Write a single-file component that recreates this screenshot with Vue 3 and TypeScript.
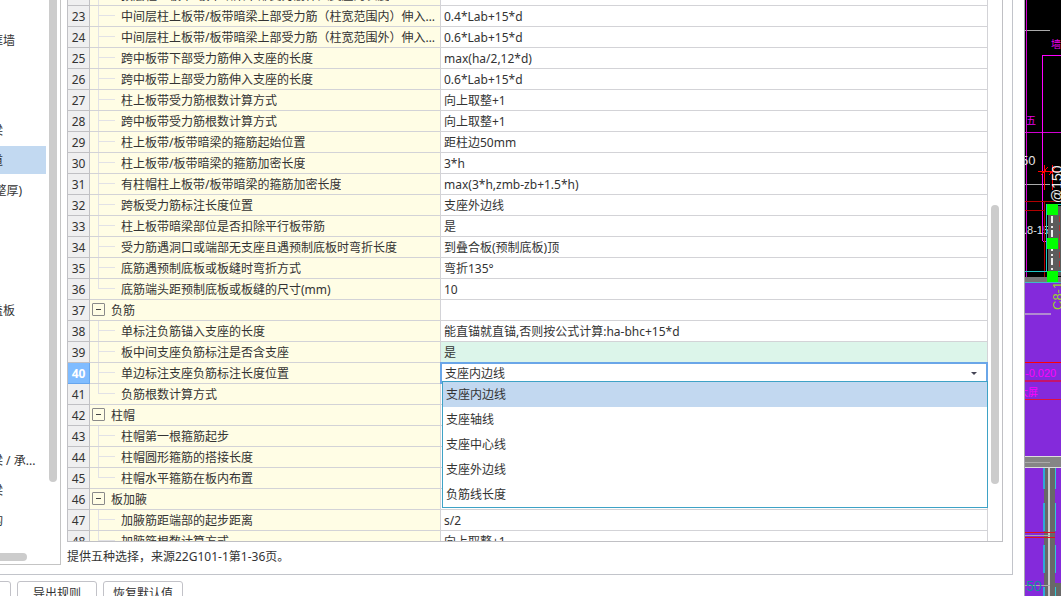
<script setup lang="ts">
import { ref } from 'vue'

interface Row {
  no: number
  name: string
  value: string
  group?: boolean
  last?: boolean
  marked?: boolean
}

const rows: Row[] = [
  { no: 22, name: '顶层柱上板带/板带暗梁下部受力筋伸入支座的长度', value: '' },
  { no: 23, name: '中间层柱上板带/板带暗梁上部受力筋（柱宽范围内）伸入支座的长度', value: '0.4*Lab+15*d' },
  { no: 24, name: '中间层柱上板带/板带暗梁上部受力筋（柱宽范围外）伸入支座的长度', value: '0.6*Lab+15*d' },
  { no: 25, name: '跨中板带下部受力筋伸入支座的长度', value: 'max(ha/2,12*d)' },
  { no: 26, name: '跨中板带上部受力筋伸入支座的长度', value: '0.6*Lab+15*d' },
  { no: 27, name: '柱上板带受力筋根数计算方式', value: '向上取整+1' },
  { no: 28, name: '跨中板带受力筋根数计算方式', value: '向上取整+1' },
  { no: 29, name: '柱上板带/板带暗梁的箍筋起始位置', value: '距柱边50mm' },
  { no: 30, name: '柱上板带/板带暗梁的箍筋加密长度', value: '3*h' },
  { no: 31, name: '有柱帽柱上板带/板带暗梁的箍筋加密长度', value: 'max(3*h,zmb-zb+1.5*h)' },
  { no: 32, name: '跨板受力筋标注长度位置', value: '支座外边线' },
  { no: 33, name: '柱上板带暗梁部位是否扣除平行板带筋', value: '是' },
  { no: 34, name: '受力筋遇洞口或端部无支座且遇预制底板时弯折长度', value: '到叠合板(预制底板)顶' },
  { no: 35, name: '底筋遇预制底板或板缝时弯折方式', value: '弯折135°' },
  { no: 36, name: '底筋端头距预制底板或板缝的尺寸(mm)', value: '10', last: true },
  { no: 37, name: '负筋', value: '', group: true },
  { no: 38, name: '单标注负筋锚入支座的长度', value: '能直锚就直锚,否则按公式计算:ha-bhc+15*d' },
  { no: 39, name: '板中间支座负筋标注是否含支座', value: '是', marked: true },
  { no: 40, name: '单边标注支座负筋标注长度位置', value: '支座内边线' },
  { no: 41, name: '负筋根数计算方式', value: '', last: true },
  { no: 42, name: '柱帽', value: '', group: true },
  { no: 43, name: '柱帽第一根箍筋起步', value: '' },
  { no: 44, name: '柱帽圆形箍筋的搭接长度', value: '' },
  { no: 45, name: '柱帽水平箍筋在板内布置', value: '', last: true },
  { no: 46, name: '板加腋', value: '', group: true },
  { no: 47, name: '加腋筋距端部的起步距离', value: 's/2' },
  { no: 48, name: '加腋筋根数计算方式', value: '向上取整+1' },
]

const options = ['支座内边线', '支座轴线', '支座中心线', '支座外边线', '负筋线长度']
const position = ref(options[0])
const activeNo = 40

const categories = [
  '', '框墙', '', '', '梁', '道', '(整厚)', '', '', '', '盖板',
  '', '', '', '', '梁 / 承...', '梁', '构',
]
const activeCategory = 5
</script>

<template>
  <div class="app">
    <main class="dialog">
      <section class="panel">
        <nav class="sidebar">
          <ul class="categories">
            <li v-for="(c, i) in categories" :key="i" :class="{ active: i === activeCategory }">
              <span>{{ c }}</span>
            </li>
          </ul>
          <div class="side-thumb"></div>
          <div class="side-hthumb"></div>
        </nav>

        <div class="content">
          <div class="grid">
            <div class="viewport">
              <table>
                <colgroup>
                  <col class="c-no" /><col class="c-name" /><col />
                </colgroup>
                <tbody>
                  <tr v-for="r in rows" :key="r.no">
                    <th scope="row" :class="{ active: r.no === activeNo }">{{ r.no }}</th>
                    <td class="name" :class="r.group ? 'group' : 'child'">
                      <div class="cell">
                        <button v-if="r.group" class="toggle" type="button" :aria-label="'折叠' + r.name"></button>
                        <span v-else class="branch" :class="{ last: r.last }"></span>
                        <span class="label">{{ r.name }}</span>
                      </div>
                    </td>
                    <td class="value" :class="{ marked: r.marked }">
                      <template v-if="r.no === activeNo">
                        <div class="combo">
                          <select v-model="position" :aria-label="r.name">
                            <option v-for="o in options" :key="o">{{ o }}</option>
                          </select>
                          <svg class="arrow" viewBox="0 0 6 3" width="6" height="3"><path d="M0 0H6L3 3Z" /></svg>
                        </div>
                        <ul class="menu" role="listbox" :aria-label="r.name">
                          <li
                            v-for="o in options" :key="o" role="option"
                            :aria-selected="o === position" @click="position = o"
                          >{{ o }}</li>
                        </ul>
                      </template>
                      <template v-else>{{ r.value }}</template>
                    </td>
                  </tr>
                </tbody>
              </table>
            </div>
            <div class="gutter"><div class="thumb"></div></div>
          </div>
          <p class="note">提供五种选择，来源22G101-1第1-36页。</p>
        </div>
      </section>

      <footer class="actions">
        <button type="button" class="cut" aria-label="导入规则"></button>
        <button type="button">导出规则</button>
        <button type="button">恢复默认值</button>
      </footer>
    </main>

    <svg class="drawing" width="37" height="596" viewBox="0 0 37 596" shape-rendering="crispEdges">
      <rect width="37" height="596" fill="#000" />
      <rect y="283" width="37" height="313" fill="#842adb" />

      <!-- upper plan -->
      <path d="M1 30.500H26M1 184.500H26" stroke="#aaa" fill="none" />
      <rect x="2" y="0" width="1" height="283" fill="#d000d0" />
      <path d="M1 132.500H37" stroke="#d000d0" />
      <path d="M18.500 241V55.500H37M18.500 241H37" stroke="#f0f" fill="none" />
      <g class="cad" fill="#e800e8">
        <text x="27" y="48" font-size="10">墙</text>
        <text x="2" y="124" font-size="10">五</text>
      </g>
      <g class="cad" fill="#e6e6e6">
        <text x="-3" y="165" font-size="13">50</text>
        <text x="0" y="234" font-size="11">.8-15</text>
      </g>
      <path d="M14 171.500H37M20.500 165V190M28.500 165V190M17 175L24 167M25 175L32 167" stroke="#f00" fill="none" />
      <path d="M1 201.500H20M1 210.500H20M20.500 277V201.500H37" stroke="#b00000" fill="none" />
      <rect x="24" y="206" width="13" height="70" fill="#5c5c5c" />
      <path d="M22.500 204V272M1 271.500H37M26 204.500H37" stroke="#20c8c8" fill="none" />
      <path d="M28 216V270" stroke="#eee" stroke-width="2" stroke-dasharray="7 3 2 2" fill="none" />
      <path d="M35 216V270" stroke="#b03030" stroke-dasharray="6 3" fill="none" />
      <rect x="1" y="277" width="37" height="5" fill="#777" />
      <rect x="1" y="282" width="36" height="1" fill="#40b8c8" />
      <g class="cad" transform="rotate(-90 38 203)">
        <text x="38" y="203" font-size="14" fill="#eee">@150</text>
      </g>
      <g class="cad" transform="rotate(-90 38 310)">
        <text x="38" y="310" font-size="13" fill="#9ad62c">C8-1</text>
      </g>
      <path d="M23 204H34V215H23ZM23 238H34V249H23ZM23 271H34V282H23Z" fill="#0f0" />

      <!-- slab -->
      <rect y="313" width="27" height="2" fill="#b08ad0" />
      <rect y="362" width="37" height="1" fill="#f00" />
      <rect y="380" width="37" height="2" fill="#c4146c" />
      <rect y="399" width="37" height="1" fill="#e0103c" />
      <g class="cad" fill="#f0f">
        <text x="1" y="377" font-size="11">-0.020</text>
        <text x="-6" y="396" font-size="10">大屏</text>
      </g>

      <!-- beams -->
      <rect y="456" width="37" height="12" fill="#858585" />
      <path d="M0 456.500H37M0 467.500H37" stroke="#ddd" />
      <path d="M0 462.500H26" stroke="#aaa" />
      <rect x="20" y="468" width="11" height="128" fill="#686868" />
      <rect x="31" y="583" width="6" height="13" fill="#686868" />
      <rect x="24" y="468" width="2" height="128" fill="#ccc" />
      <path d="M20 468V489M20 503V531M20 545V573M20 587V596" stroke="#30a8d8" stroke-width="2" />
      <path d="M31.500 468V489M31.500 503V531M31.500 545V573M31.500 587V596" stroke="#30c8d8" />
      <path d="M0 535.500H26M0 585.500H26" stroke="#aaa" />
      <path d="M0 532.500H31M0 537.500H31" stroke="#e01020" />
      <text class="cad" x="2" y="591" font-size="14" fill="#10939a">50</text>
      <rect width="1" height="596" fill="#a8a8b0" />
    </svg>
  </div>
</template>

<style>
body {
  margin: 0;
}
</style>

<style scoped>
.app {
  display: flex;
  height: 100vh;
  overflow: hidden;
  background: #fff;
  color: #333;
  font: 12px/20px "Noto Sans", "Noto Sans CJK SC", sans-serif;
}
ul {
  list-style: none;
  margin: 0;
  padding: 0;
}
.dialog {
  flex: 1;
  min-width: 0;
  display: flex;
  flex-direction: column;
}
.panel {
  flex: 1;
  min-height: 0;
  display: flex;
  margin-right: 11px;
  border: solid #c2c4ca;
  border-width: 0 1px 1px 0;
}
.sidebar {
  position: relative;
  box-sizing: border-box;
  flex: 0 0 61px;
  margin-bottom: 9px;
  border: solid #c4c4c4;
  border-width: 0 1px 1px 0;
  overflow: hidden;
}
.categories {
  width: 46px;
  margin-top: -4px;
}
.categories li {
  height: 28px;
  margin-bottom: 2px;
  line-height: 30px;
  white-space: nowrap;
}
.categories span {
  margin-left: -9px;
}
.categories .active {
  background: #c2d9f1;
}
.side-thumb,
.side-hthumb {
  position: absolute;
  background: #ccc;
}
.side-thumb {
  top: 0;
  right: 3px;
  width: 8px;
  height: 482px;
  border-radius: 0 0 4px 4px;
}
.side-hthumb {
  left: 0;
  bottom: 3px;
  width: 27px;
  height: 8px;
  border-radius: 0 4px 4px 0;
}
.content {
  flex: 1;
  min-width: 0;
  display: flex;
  flex-direction: column;
  margin: 0 9px 0 6px;
}
.grid {
  flex: 1;
  min-height: 0;
  display: flex;
  border: solid #c0c0c4;
  border-width: 0 1px 1px;
}
.viewport {
  flex: 1;
  min-width: 0;
  overflow: hidden;
}
table {
  width: 100%;
  margin-top: -15px;
  table-layout: fixed;
  border-spacing: 0;
}
.c-no {
  width: 22px;
}
.c-name {
  width: 351px;
}
th,
td {
  box-sizing: border-box;
  height: 21px;
  padding: 2px 0 0;
  border: solid #d3d3d7;
  border-width: 0 1px 1px 0;
  line-height: 18px;
  white-space: nowrap;
}
th {
  background: #efeff0;
  border-color: #c0c0c4;
  font-weight: 400;
  text-align: center;
}
th.active {
  background: #80bcff;
  border-color: #66a5ee;
  color: #fff;
  font-weight: 700;
}
.name {
  padding: 0;
  background: #fffde5;
}
.cell {
  position: relative;
  box-sizing: border-box;
  display: flex;
  align-items: flex-start;
  height: 20px;
}
.child .cell {
  padding: 2px 4px 0 31px;
}
.group .cell {
  padding: 2px 0 0 2px;
  gap: 6px;
}
.label {
  overflow: hidden;
  text-overflow: ellipsis;
}
.branch::before,
.branch::after {
  content: "";
  position: absolute;
  left: 8px;
  background: #e2e2e6;
}
.branch::before {
  top: 0;
  width: 1px;
  height: 20px;
}
.branch.last::before {
  height: 9px;
}
.branch::after {
  top: 9px;
  width: 17px;
  height: 1px;
}
.toggle {
  display: grid;
  place-items: center;
  box-sizing: border-box;
  width: 13px;
  height: 13px;
  margin: 1px 0 0;
  padding: 0;
  border: 1px solid #8a8a8a;
  border-radius: 1px;
  background: #fffde5;
}
.toggle::before {
  content: "";
  width: 5px;
  height: 1px;
  background: #444;
}
.value {
  position: relative;
  padding-left: 3px;
}
.marked {
  background: #dcf5ea;
}
.combo {
  position: absolute;
  inset: -1px;
  box-sizing: border-box;
  display: flex;
  align-items: center;
  border: 2px solid #6aa6e8;
  background: #fff;
}
.combo select {
  appearance: none;
  box-sizing: border-box;
  width: 100%;
  height: 20px;
  padding: 2px 3px 0;
  border: 0;
  outline: 0;
  background: transparent;
  color: inherit;
  font: inherit;
  line-height: 18px;
}
.arrow {
  position: absolute;
  right: 9px;
  fill: #445;
}
.menu {
  position: absolute;
  z-index: 2;
  top: 18px;
  left: 1px;
  right: -1px;
  border: 1px solid #3ea2c6;
  background: #fff;
}
.menu li {
  height: 25px;
  padding-left: 3px;
  line-height: 25px;
}
.menu li[aria-selected="true"] {
  background: #c2d8f0;
}
.gutter {
  flex: 0 0 14px;
}
.thumb {
  width: 8px;
  height: 279px;
  margin: 205px 0 0 3px;
  border-radius: 4px;
  background: #ccc;
}
.note {
  flex: 0 0 32px;
  margin: 0;
  line-height: 30px;
  white-space: nowrap;
}
.actions {
  display: flex;
  gap: 6px;
  height: 21px;
  padding-top: 6px;
  box-sizing: border-box;
}
.actions button {
  box-sizing: border-box;
  flex: 0 0 80px;
  height: 26px;
  padding: 0;
  border: 1px solid #c2c2c8;
  border-radius: 3px;
  background: #fff;
  color: inherit;
  font: inherit;
}
.actions .cut {
  margin-left: -69px;
}
.drawing {
  flex: 0 0 37px;
}
.cad {
  font-family: "Liberation Sans", "Noto Sans CJK SC", sans-serif;
}
</style>
